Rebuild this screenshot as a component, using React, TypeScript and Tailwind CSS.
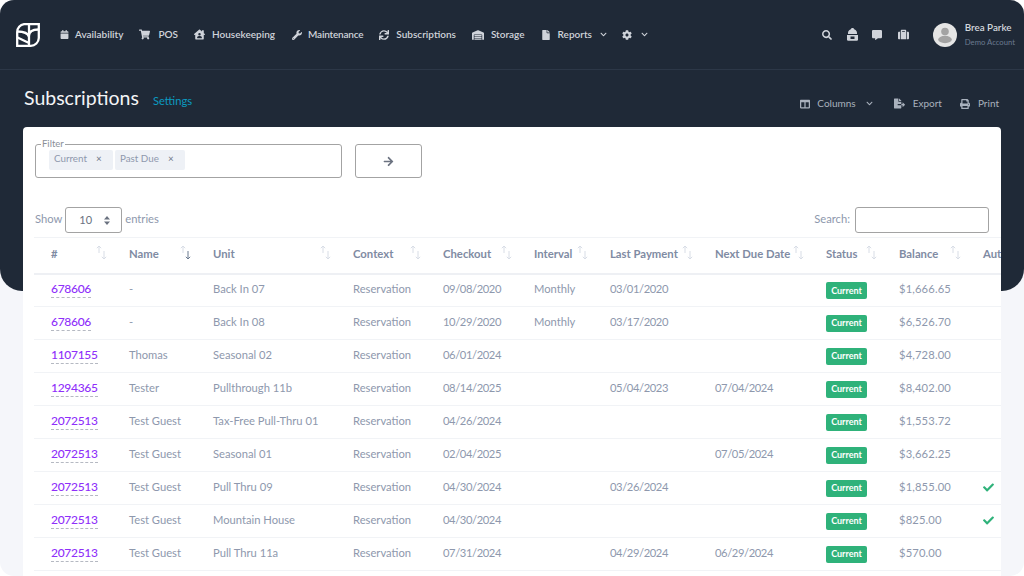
import React from "react";
import { FaCalendar, FaShoppingCart, FaHouseUser, FaWrench, FaSync, FaWarehouse, FaFile, FaChevronDown, FaCog, FaSearch, FaCommentAlt, FaSuitcase, FaColumns, FaFileExport, FaPrint, FaCheck, FaArrowRight } from "react-icons/fa";

const font = { fontFamily: '"Lato", "Noto Sans", sans-serif' };

function Logo() {
  return (
    <svg width="24" height="24" viewBox="0 0 24 24" fill="none" stroke="white" strokeWidth="2.300" className="shrink-0">
      <path d="M8 1.200H22.800V15a8 8 0 0 1-8 7.800H1.200V9A8 8 0 0 1 8 1.200Z" />
      <path d="M13 1.500V22.500M13 13C13 8 17 6.500 22.500 6.500M1.500 8.500C7 8.500 12 10 13 14M1.500 14.500L13 20" />
    </svg>
  );
}

function Backpack() {
  return (
    <svg width="11" height="13" viewBox="0 0 11 13" fill="currentColor">
      <path d="M3.500 1.600C3.800.6 4.600 0 5.500 0s1.700.6 2 1.600C9.200 2.200 10 3.600 10 5v1H1V5c0-1.400.8-2.800 2.500-3.400Z" />
      <path d="M0 7h11v4.500a1.200 1.200 0 0 1-1.200 1.200H1.200A1.200 1.200 0 0 1 0 11.500Z" />
      <rect x="3.500" y="8.500" width="4" height="2.500" fill="#1f2937" />
    </svg>
  );
}

function Avatar() {
  return (
    <svg width="24" height="24" viewBox="0 0 24 24" className="shrink-0">
      <circle cx="12" cy="12" r="12" fill="#e5e5e5" />
      <circle cx="12" cy="8.500" r="3.800" fill="#a3a3a3" />
      <ellipse cx="12" cy="16.500" rx="6.800" ry="3.700" fill="#a3a3a3" />
    </svg>
  );
}

function Sort({ down = false }: { down?: boolean }) {
  return (
    <svg width="11" height="15" viewBox="0 0 11 15" fill="none" strokeWidth="1" className="shrink-0 -mt-[4px]">
      <path d="M3 8V1M.8 3.200 3 1l2.200 2.200" stroke="#d8dde6" />
      <path d="M8 6v8M5.800 11.800 8 14l2.200-2.200" stroke={down ? "#6b7a90" : "#d8dde6"} />
    </svg>
  );
}

const nav: [React.ReactNode, string, string, string][] = [
  [<FaCalendar size={9} />, "Availability", "w-[9px] mr-[6px]", ""],
  [<FaShoppingCart size={11} />, "POS", "w-[11px] mr-[8px]", ""],
  [<FaHouseUser size={11} />, "Housekeeping", "w-[11px] mr-[7px]", ""],
  [<FaWrench size={10} />, "Maintenance", "w-[11px] mr-[6px]", "tracking-[-0.2px]"],
  [<FaSync size={10} />, "Subscriptions", "w-[10px] mr-[7px]", ""],
  [<FaWarehouse size={12} />, "Storage", "w-[12px] mr-[7px]", ""],
];

const columns: [string, string][] = [
  ["#", "w-[78px]"],
  ["Name", "w-[84px]"],
  ["Unit", "w-[140px]"],
  ["Context", "w-[90px]"],
  ["Checkout", "w-[91px]"],
  ["Interval", "w-[76px]"],
  ["Last Payment", "w-[105px]"],
  ["Next Due Date", "w-[111px]"],
  ["Status", "w-[73px]"],
  ["Balance", "w-[84px]"],
  ["Autopay", "w-[80px]"],
];

const rows = [
  ["678606", "-", "Back In 07", "09/08/2020", "Monthly", "03/01/2020", "", "$1,666.65", false],
  ["678606", "-", "Back In 08", "10/29/2020", "Monthly", "03/17/2020", "", "$6,526.70", false],
  ["1107155", "Thomas", "Seasonal 02", "06/01/2024", "", "", "", "$4,728.00", false],
  ["1294365", "Tester", "Pullthrough 11b", "08/14/2025", "", "05/04/2023", "07/04/2024", "$8,402.00", false],
  ["2072513", "Test Guest", "Tax-Free Pull-Thru 01", "04/26/2024", "", "", "", "$1,553.72", false],
  ["2072513", "Test Guest", "Seasonal 01", "02/04/2025", "", "", "07/05/2024", "$3,662.25", false],
  ["2072513", "Test Guest", "Pull Thru 09", "04/30/2024", "", "03/26/2024", "", "$1,855.00", true],
  ["2072513", "Test Guest", "Mountain House", "04/30/2024", "", "", "", "$825.00", true],
  ["2072513", "Test Guest", "Pull Thru 11a", "07/31/2024", "", "04/29/2024", "06/29/2024", "$570.00", false],
] as const;

export default function App() {
  return (
    <div style={font} className="w-[1024px] h-[576px] bg-white overflow-hidden">
      <div className="h-full bg-[#f5f6fa] rounded-[14px] overflow-hidden">
        <div className="h-[291px] bg-[#1f2937] rounded-b-[22px]">
          <header className="h-[70px] border-b border-[#2c3747] flex items-center pl-[16px] pr-[9px] text-[#cfd3da] text-[10px] font-semibold">
            <Logo />
            <nav className="flex items-center ml-[20px] gap-[16px]">
              {nav.map(([icon, label, box, text]) => (
                <div key={label} className="flex items-center">
                  <span className={`${box} flex justify-center`}>{icon}</span>
                  <span className={text}>{label}</span>
                </div>
              ))}
              <div className="flex items-center">
                <FaFile size={10} className="mr-[7px]" />
                <span>Reports</span>
                <FaChevronDown size={7} className="ml-[8px]" />
              </div>
              <div className="flex items-center gap-[9px] -ml-[1px]">
                <FaCog size={10} />
                <FaChevronDown size={7} />
              </div>
            </nav>
            <div className="ml-auto flex items-center">
              <FaSearch size={10} />
              <span className="ml-[15px]"><Backpack /></span>
              <FaCommentAlt size={10} className="ml-[14px]" />
              <FaSuitcase size={11} className="ml-[16px]" />
              <div className="flex items-center gap-[8px] ml-[24px]">
                <Avatar />
                <div className="leading-none">
                  <div className="text-[9.800px] font-semibold text-[#d4d8de]">Brea Parke</div>
                  <div className="text-[7.700px] mt-[6px] text-[#6b7a90] font-normal">Demo Account</div>
                </div>
              </div>
            </div>
          </header>
          <div className="flex items-start pl-[24px] pr-[25px] pt-[16px]">
            <h1 className="text-[19.500px] leading-[24px] text-[#f3f4f6] font-normal">Subscriptions</h1>
            <a className="ml-[14px] mt-[8px] text-[#0b9ac0] text-[11.200px] leading-[14px]">Settings</a>
            <div className="ml-auto mt-[10px] flex items-center text-[#a9b1bd] text-[10px]">
              <FaColumns size={10} />
              <span className="ml-[7px]">Columns</span>
              <FaChevronDown size={7} className="ml-[10px]" />
              <FaFileExport size={11} className="ml-[21px]" />
              <span className="ml-[8px]">Export</span>
              <FaPrint size={10} className="ml-[18px]" />
              <span className="ml-[8px]">Print</span>
            </div>
          </div>
        </div>

        <main className="-mt-[164px] relative ml-[23px] w-[978px] h-[500px] bg-white rounded-[4px] overflow-hidden text-[#8e98ad] text-[11.200px]">
          <div className="flex items-start pl-[12px] pt-[11px]">
            <fieldset className="w-[307px] h-[38px] border border-[#a3a3a3] rounded-[3px] pl-[13px] mt-[2px]">
              <legend className="text-[9.500px] leading-[8px] ml-[-8px] px-[1px] text-[#8a8f98]">Filter</legend>
              <div className="flex gap-[2px] text-[9.800px] mt-[2px]">
                <span className="w-[64px] h-[20px] bg-[#eef1f6] rounded-[2px] flex pl-[5px] pt-[1px]">
                  Current<span className="ml-[9px] text-[#6f7887]">×</span>
                </span>
                <span className="w-[70px] h-[20px] bg-[#eef1f6] rounded-[2px] flex pl-[5px] pt-[1px]">
                  Past Due<span className="ml-[9px] text-[#6f7887]">×</span>
                </span>
              </div>
            </fieldset>
            <button className="ml-[13px] mt-[6px] w-[67px] h-[34px] border border-[#a3a3a3] rounded-[3px] flex items-center justify-center text-[#6b7280]">
              <FaArrowRight size={11} />
            </button>
          </div>

          <div className="flex items-center justify-between pl-[12px] pr-[12px] mt-[29px] h-[26px]">
            <div className="flex items-center">
              <span className="-mt-[2px]">Show</span>
              <div className="ml-[3px] w-[57px] h-[26px] border border-[#a3a3a3] rounded-[3px] flex items-center pl-[13px] text-[#6b7280] text-[11px]">
                <span>10</span>
                <svg width="6" height="9" viewBox="0 0 6 9" fill="#6b7280" className="ml-[12px]">
                  <path d="M3 0 6 3.500H0ZM3 9 0 5.500H6Z" />
                </svg>
              </div>
              <span className="ml-[3px] -mt-[2px]">entries</span>
            </div>
            <div className="flex items-center">
              <span className="-mt-[2px]">Search:</span>
              <div className="ml-[5px] w-[134px] h-[26px] border border-[#a3a3a3] rounded-[3px]" />
            </div>
          </div>

          <table className="ml-[11px] mt-[4px] table-fixed border-collapse w-[1012px]">
            <thead>
              <tr className="h-[36px] border-t border-b-2 border-t-[#f1f3f6] border-b-[#eef0f4]">
                {columns.map(([label, w], i) => (
                  <th key={label} className={`${w} pl-[17px] pb-[2px] text-left text-[11.300px] font-bold text-[#7f8ba3] whitespace-nowrap`}>
                    <div className="flex items-center justify-between pr-[5px]">
                      <span>{label}</span>
                      {i < 10 && <Sort down={i === 1} />}
                    </div>
                  </th>
                ))}
              </tr>
            </thead>
            <tbody>
              {rows.map((r, i) => (
                <tr key={i} className="h-[33px] border-b border-[#f1f3f6]">
                  <td className="pl-[17px] pb-[2px]">
                    <a className="text-[#8f2ffa] text-[12px] tracking-[-0.3px] font-medium border-b border-dashed border-[#b5b9c2] pb-[1px]">{r[0]}</a>
                  </td>
                  <td className="pl-[17px] pb-[2px]">{r[1]}</td>
                  <td className="pl-[17px] pb-[2px] whitespace-nowrap">{r[2]}</td>
                  <td className="pl-[17px] pb-[2px]">Reservation</td>
                  <td className="pl-[17px] pb-[2px] tracking-[-0.4px]">{r[3]}</td>
                  <td className="pl-[17px] pb-[2px]">{r[4]}</td>
                  <td className="pl-[17px] pb-[2px] tracking-[-0.4px]">{r[5]}</td>
                  <td className="pl-[17px] pb-[2px] tracking-[-0.4px]">{r[6]}</td>
                  <td className="pl-[17px]">
                    <span className="inline-flex items-center justify-center w-[41px] h-[17px] rounded-[2px] bg-[#2fb27a] text-white text-[9px] font-bold">Current</span>
                  </td>
                  <td className="pl-[17px] pb-[2px] tracking-[0.15px]">{r[7]}</td>
                  <td className="pl-[17px] pb-[2px]">{r[8] && <FaCheck size={11} className="text-[#2fb27a]" />}</td>
                </tr>
              ))}
            </tbody>
          </table>
        </main>
      </div>
    </div>
  );
}
